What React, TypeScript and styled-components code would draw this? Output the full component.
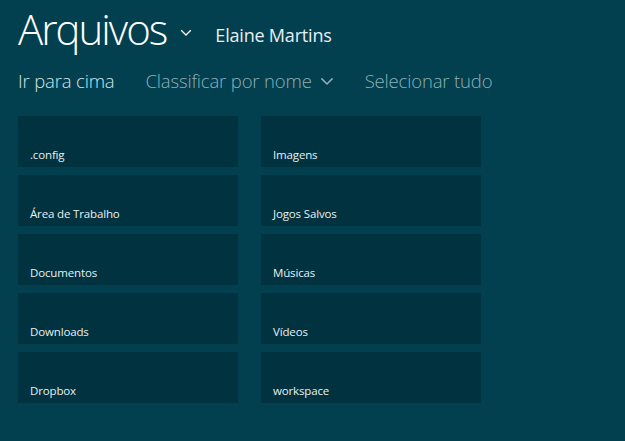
import React from 'react';
import styled, { createGlobalStyle } from 'styled-components';

const GlobalStyle = createGlobalStyle`
  html, body {
    margin: 0;
    padding: 0;
    background: #023f4f;
  }
  body {
    font-family: 'Open Sans', 'Noto Sans', sans-serif;
    color: #ffffff;
  }
`;

const folders = [
  '.config',
  'Imagens',
  'Área de Trabalho',
  'Jogos Salvos',
  'Documentos',
  'Músicas',
  'Downloads',
  'Vídeos',
  'Dropbox',
  'workspace',
];

function Chevron({ size, color }: { size: number; color: string }) {
  return (
    <svg width={size} height={size * 0.6} viewBox="0 0 10 6" fill="none">
      <path d="M1 1l4 4 4-4" stroke={color} strokeWidth="1.1" />
    </svg>
  );
}

export default function App() {
  return (
    <>
      <GlobalStyle />
      <Page>
        <Header>
          <Title>Arquivos</Title>
          <TitleChevron>
            <Chevron size={12} color="#ffffff" />
          </TitleChevron>
          <UserName>Elaine Martins</UserName>
        </Header>

        <Toolbar>
          <ToolItem active>Ir para cima</ToolItem>
          <ToolItem>
            Classificar por nome
            <ToolChevron>
              <Chevron size={14} color="#8db0b8" />
            </ToolChevron>
          </ToolItem>
          <ToolItem>Selecionar tudo</ToolItem>
        </Toolbar>

        <Grid>
          {folders.map((name) => (
            <Tile key={name}>
              <TileLabel>{name}</TileLabel>
            </Tile>
          ))}
        </Grid>
      </Page>
    </>
  );
}

const Page = styled.div`
  width: 625px;
  height: 441px;
  padding: 0 0 0 18px;
  box-sizing: border-box;
  overflow: hidden;
`;

const Header = styled.div`
  display: flex;
  align-items: baseline;
  height: 58px;
`;

const Title = styled.h1`
  margin: 0;
  font-family: 'Open Sans', sans-serif;
  font-weight: 300;
  font-size: 42px;
  line-height: 58px;
  letter-spacing: -2px;
  color: #ffffff;
`;

const TitleChevron = styled.span`
  display: inline-flex;
  margin: 0 23px 0 14px;
  transform: translateY(-9px);
`;

const UserName = styled.span`
  font-family: 'Open Sans', sans-serif;
  font-weight: 400;
  font-size: 18px;
  color: #e6eff1;
  letter-spacing: -0.2px;
  transform: translateY(-3px);
`;

const Toolbar = styled.div`
  display: flex;
  align-items: center;
  gap: 31px;
  height: 44px;
`;

const ToolItem = styled.span<{ active?: boolean }>`
  display: inline-flex;
  align-items: center;
  font-family: 'Open Sans', sans-serif;
  font-weight: 300;
  font-size: 18.5px;
  letter-spacing: -0.16px;
  color: ${(p) => (p.active ? '#d4e4e8' : '#8db0b8')};
`;

const ToolChevron = styled.span`
  display: inline-flex;
  margin-left: 8px;
  margin-top: 3px;
`;

const Grid = styled.div`
  display: grid;
  grid-template-columns: 220px 220px;
  grid-auto-rows: 51px;
  column-gap: 23px;
  row-gap: 8px;
  margin-top: 14px;
`;

const Tile = styled.div`
  background: #00323f;
  display: flex;
  align-items: flex-end;
  padding: 0 0 5px 12px;
  box-sizing: border-box;
`;

const TileLabel = styled.span`
  font-family: 'Open Sans', sans-serif;
  font-size: 11.5px;
  color: #e8f0f2;
  letter-spacing: -0.15px;
`;
